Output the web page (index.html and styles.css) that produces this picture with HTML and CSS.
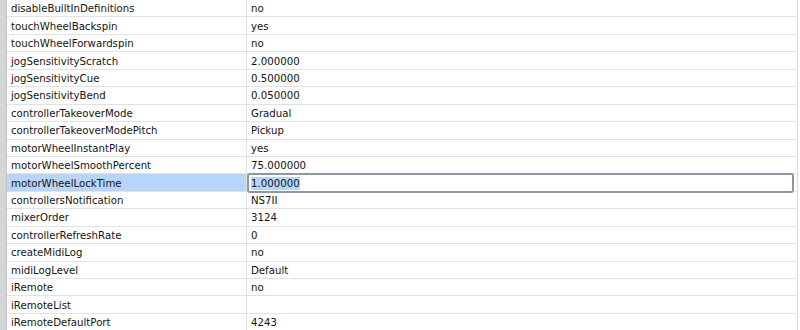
FILE: index.html
```html
<!DOCTYPE html>
<html>
<head>
<meta charset="utf-8">
<link rel="stylesheet" href="styles.css">
</head>
<body>
<div class="pane">
  <div class="strip"></div>
  <div class="table">
    <div class="row"><div class="key">disableBuiltInDefinitions</div><div class="val">no</div></div>
    <div class="row"><div class="key">touchWheelBackspin</div><div class="val">yes</div></div>
    <div class="row"><div class="key">touchWheelForwardspin</div><div class="val">no</div></div>
    <div class="row"><div class="key">jogSensitivityScratch</div><div class="val">2.000000</div></div>
    <div class="row"><div class="key">jogSensitivityCue</div><div class="val">0.500000</div></div>
    <div class="row"><div class="key">jogSensitivityBend</div><div class="val">0.050000</div></div>
    <div class="row"><div class="key">controllerTakeoverMode</div><div class="val">Gradual</div></div>
    <div class="row"><div class="key">controllerTakeoverModePitch</div><div class="val">Pickup</div></div>
    <div class="row"><div class="key">motorWheelInstantPlay</div><div class="val">yes</div></div>
    <div class="row"><div class="key">motorWheelSmoothPercent</div><div class="val">75.000000</div></div>
    <div class="row selected"><div class="key">motorWheelLockTime</div><div class="val"><div class="editor"><span class="sel">1.000000</span></div></div></div>
    <div class="row"><div class="key">controllersNotification</div><div class="val">NS7II</div></div>
    <div class="row"><div class="key">mixerOrder</div><div class="val">3124</div></div>
    <div class="row"><div class="key">controllerRefreshRate</div><div class="val">0</div></div>
    <div class="row"><div class="key">createMidiLog</div><div class="val">no</div></div>
    <div class="row"><div class="key">midiLogLevel</div><div class="val">Default</div></div>
    <div class="row"><div class="key">iRemote</div><div class="val">no</div></div>
    <div class="row"><div class="key">iRemoteList</div><div class="val"></div></div>
    <div class="row"><div class="key">iRemoteDefaultPort</div><div class="val">4243</div></div>
  </div>
  <div class="edge"></div>
</div>
</body>
</html>
```
FILE: styles.css
```css
html, body {
  margin: 0;
  padding: 0;
  background: #ffffff;
}
body {
  width: 800px;
  height: 330px;
  overflow: hidden;
  font-family: "DejaVu Sans", "Liberation Sans", sans-serif;
  font-size: 10.2px;
  color: #141414;
}
.pane {
  display: flex;
  height: 330px;
}
.strip {
  width: 6px;
  flex: none;
  background: #d6d6d6;
  border-right: 1px solid #c4c4c4;
}
.table {
  width: 790px;
  flex: none;
  border-right: 1px solid #dcdcdc;
}
.edge {
  flex: 1;
  background: #ffffff;
}
.row {
  display: grid;
  grid-template-columns: 240px 1fr;
  height: 17.45px;
  box-sizing: border-box;
  border-bottom: 1px solid #e2e2e2;
}
.key, .val {
  display: flex;
  align-items: center;
  white-space: nowrap;
  overflow: visible;
  padding-top: 1px;
}
.key {
  padding-left: 4px;
  border-right: 1px solid #e2e2e2;
}
.val {
  padding-left: 4px;
  position: relative;
}
.selected .key {
  background: #b7d5fb;
}
.editor {
  position: absolute;
  left: 0;
  right: 3px;
  top: -1px;
  bottom: -2px;
  border: 2px solid #8b97a5;
  border-radius: 3px;
  background: #ffffff;
  display: flex;
  align-items: center;
  padding-left: 2px;
}
.sel {
  background: #b5d5fd;
  line-height: 13px;
}
```
